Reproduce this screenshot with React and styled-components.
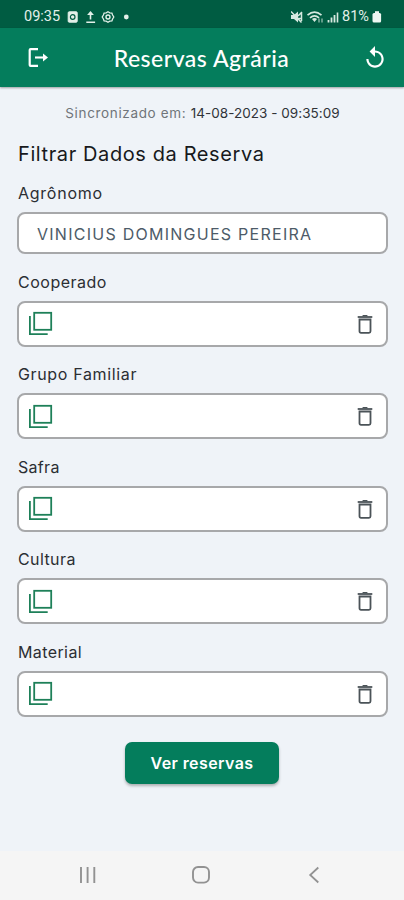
import React from "react";
import styled, { createGlobalStyle } from "styled-components";
import { MdReplay } from "react-icons/md";

const filters = [
  { name: "Cooperado", spacing: "0.5px" },
  { name: "Grupo Familiar", spacing: "0.65px" },
  { name: "Safra", spacing: "0.3px" },
  { name: "Cultura", spacing: "0.4px" },
  { name: "Material", spacing: "0.4px" },
];

const StatusIcons = () => (
  <svg width="66" height="14" viewBox="0 0 66 14" fill="none" stroke="#e3f0e9">
    <rect x="1.2" y="1.8" width="9" height="10.4" rx="1" fill="#e3f0e9" />
    <circle cx="5.7" cy="7" r="2.3" stroke="#005c42" strokeWidth="1.2" />
    <path d="M23.5 9.5V3.5M19.3 12.3h8.8" strokeWidth="1.6" />
    <path d="M23.5 1l3.4 4h-6.8z" fill="#e3f0e9" stroke="none" />
    <path
      d="M41 1.8l1.8 1 2.1.2.7 2L46.8 7l-1.2 2-.7 2-2.1.2-1.8 1-1.8-1-2.1-.2-.7-2L35.2 7l1.2-2 .7-2 2.1-.2z"
      strokeWidth="1.3"
    />
    <circle cx="41" cy="7" r="2" strokeWidth="1.4" />
    <circle cx="59.3" cy="7" r="2.4" fill="#e3f0e9" stroke="none" />
  </svg>
);

const SignalIcons = () => (
  <svg width="51" height="14" viewBox="0 0 51 14" fill="none" stroke="#d6e9e0">
    <path d="M0 5h3l4-3.500v11L3 9H0z" fill="#d6e9e0" stroke="none" />
    <path d="M0 1.500l10.500 11M7 6l4-4M7 8.500h4M10.500 2v9" strokeWidth="1.500" />
    <path d="M16.500 5.200q7-6 14 0M19 7.800q4.500-3.800 9 0" strokeWidth="1.700" />
    <path d="M21 9q2.500-2 5 0l-2.500 3z" fill="#d6e9e0" stroke="none" />
    <path d="M28 8.500v4M31 12.500v-4" strokeWidth="0.9" />
    <path d="M37.500 12.500V10M40.500 12.500V7.500M43.500 12.500V5" strokeWidth="1.800" />
    <path d="M46.500 12.500V2.500" strokeWidth="1.600" />
  </svg>
);

const BatteryIcon = () => (
  <svg width="10" height="13" viewBox="0 0 10 13" fill="#eef7f2">
    <rect x="3" y="1.200" width="4" height="3" />
    <rect x="0.500" y="3" width="8.600" height="9.500" rx="1.500" />
  </svg>
);

const LogoutIcon = () => (
  <svg width="22" height="22" viewBox="0 0 22 22" fill="none" stroke="#fff">
    <path d="M12 2.200H4.600Q3.700 2.200 3.700 3.100v14.800q0 .9.900.9H12" strokeWidth="2.200" />
    <path d="M9 10.500h8.500" strokeWidth="2.100" />
    <path d="M17 6.600l5 3.900-5 3.900z" fill="#fff" stroke="none" />
  </svg>
);

const LayersIcon = () => (
  <svg width="25" height="25" viewBox="0 0 25 25" fill="none" stroke="#1e8059">
    <rect x="6.2" y="1.8" width="17" height="17" strokeWidth="1.8" />
    <path d="M1.900 5v18.200h17.800" strokeWidth="1.8" />
  </svg>
);

const TrashIcon = () => (
  <svg width="16" height="20" viewBox="0 0 16 20" fill="none" stroke="#4b5358">
    <path d="M0.700 3h14.600" strokeWidth="1.8" />
    <path d="M5 2.200L6 1h4l1 1.200z" fill="#4b5358" stroke="none" />
    <path d="M2.500 5.500h11v11.800q0 1.500-1.500 1.500H4q-1.500 0-1.500-1.500z" strokeWidth="1.8" />
  </svg>
);

function App() {
  return (
    <Screen>
      <GlobalStyle />
      <StatusBar>
        <Clock>09:35</Clock>
        <StatusIcons />
        <StatusRight>
          <SignalIcons />
          <Percent>81%</Percent>
          <BatteryIcon />
        </StatusRight>
      </StatusBar>
      <Header>
        <IconButton aria-label="Sair">
          <LogoutIcon />
        </IconButton>
        <HeaderTitle>Reservas Agrária</HeaderTitle>
        <IconButton aria-label="Sincronizar">
          <MdReplay size={26} />
        </IconButton>
      </Header>
      <Content>
        <SyncInfo>
          Sincronizado em: <strong>14-08-2023 - 09:35:09</strong>
        </SyncInfo>
        <SectionTitle>Filtrar Dados da Reserva</SectionTitle>
        <Field>
          <Label $spacing="0.75px">Agrônomo</Label>
          <ValueBox>VINICIUS DOMINGUES PEREIRA</ValueBox>
        </Field>
        {filters.map(({ name, spacing }) => (
          <Field key={name}>
            <Label $spacing={spacing}>{name}</Label>
            <SelectBox>
              <LayersIcon />
              <TrashIcon />
            </SelectBox>
          </Field>
        ))}
        <SubmitButton>Ver reservas</SubmitButton>
      </Content>
      <NavBar>
        <svg width="18" height="18" viewBox="0 0 18 18" stroke="#929292" strokeWidth="1.9">
          <path d="M2 1v16M8.600 1v16M15.300 1v16" />
        </svg>
        <svg width="20" height="20" viewBox="0 0 20 20" fill="none" stroke="#929292">
          <rect x="2" y="2" width="16" height="15.600" rx="5" strokeWidth="1.9" />
        </svg>
        <svg width="16" height="18" viewBox="0 0 16 18" fill="none" stroke="#929292">
          <path d="M14.300 1.500L6.200 9l8.100 7.500" strokeWidth="1.8" />
        </svg>
      </NavBar>
    </Screen>
  );
}

const GlobalStyle = createGlobalStyle`
  * {
    box-sizing: border-box;
  }
  body {
    margin: 0;
    font-family: Inter, "Noto Sans", sans-serif;
  }
  svg {
    display: block;
    flex-shrink: 0;
  }
  button {
    border: none;
    padding: 0;
    font-family: inherit;
  }
`;

const Screen = styled.div`
  display: flex;
  flex-direction: column;
  width: 404px;
  height: 900px;
  overflow: hidden;
  background: #eff3f8;
`;

const StatusBar = styled.div`
  display: flex;
  align-items: center;
  height: 28px;
  padding: 5px 22px 0 24px;
  background: #005c42;
  color: #e3f0e9;
  font-family: Roboto, sans-serif;
  font-size: 14.5px;
`;

const Clock = styled.span`
  width: 43px;
`;

const StatusRight = styled.div`
  display: flex;
  align-items: center;
  margin-left: auto;
`;

const Percent = styled.span`
  width: 30px;
  font-size: 14.5px;
`;

const Header = styled.header`
  display: flex;
  align-items: center;
  justify-content: space-between;
  height: 59px;
  padding: 0 16px 0 26px;
  background: #047d5c;
  box-shadow: 0 1px 2px rgba(0, 0, 0, 0.35);
`;

const IconButton = styled.button`
  display: flex;
  align-items: center;
  background: none;
  color: #fff;
`;

const HeaderTitle = styled.h1`
  margin: 0;
  padding-right: 7px;
  color: #fff;
  font-family: Lato, sans-serif;
  font-size: 23px;
  font-weight: 500;
  letter-spacing: 0.5px;
  white-space: nowrap;
`;

const Content = styled.main`
  display: flex;
  flex: 1;
  flex-direction: column;
  padding: 16px 16px 0 17px;
`;

const SyncInfo = styled.p`
  margin: 0;
  color: #70757a;
  font-size: 13.5px;
  line-height: 20px;
  letter-spacing: 0.65px;
  text-align: center;
  white-space: nowrap;

  strong {
    color: #303338;
    font-weight: 400;
    letter-spacing: 0.03px;
  }
`;

const SectionTitle = styled.h2`
  margin: 16px 0 14px 1px;
  color: #17191c;
  font-size: 20px;
  font-weight: 400;
  line-height: 30px;
  letter-spacing: 0.6px;
`;

const Field = styled.div`
  margin-bottom: 17.5px;
`;

const Label = styled.div`
  margin-bottom: 9px;
  padding-left: 1px;
  color: #2b2e33;
  font-size: 16px;
  line-height: 20px;
  letter-spacing: ${(props) => props.$spacing};
`;

const Box = styled.div`
  display: flex;
  align-items: center;
  border: 2px solid #a7a8aa;
  border-radius: 8px;
  background: #fff;
`;

const ValueBox = styled(Box)`
  height: 42px;
  padding: 1px 18px 0;
  color: #4d5b68;
  font-size: 16px;
  letter-spacing: 1.26px;
  white-space: nowrap;
`;

const SelectBox = styled(Box)`
  justify-content: space-between;
  height: 46px;
  padding: 0 13px 0 9px;
`;

const SubmitButton = styled.button`
  align-self: center;
  width: 154px;
  height: 42px;
  margin: 8px 1px 0 0;
  border-radius: 7px;
  background: #047d5c;
  box-shadow: 0 2px 3px rgba(0, 0, 0, 0.28);
  color: #fff;
  font-size: 16px;
  font-weight: 600;
  letter-spacing: 0.4px;
`;

const NavBar = styled.nav`
  display: flex;
  align-items: center;
  justify-content: space-between;
  height: 49px;
  padding: 0 84px 1px 79px;
  background: #f5f5f5;
`;

export default App;
